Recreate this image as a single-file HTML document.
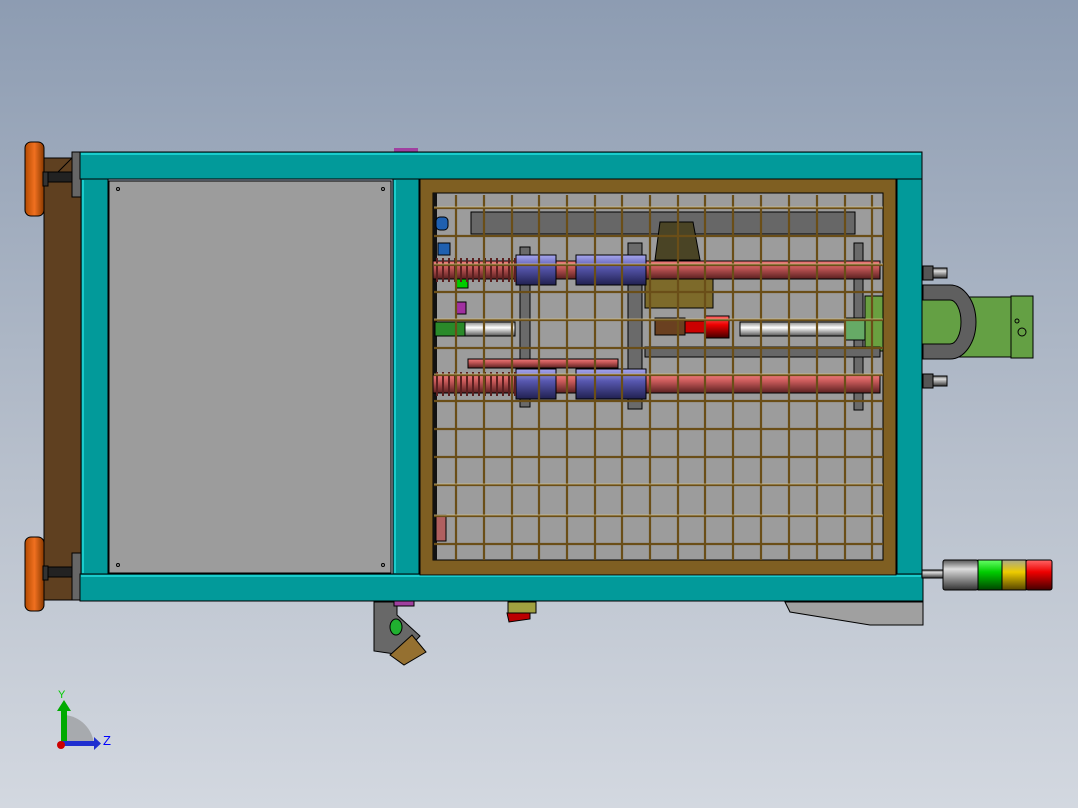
<!DOCTYPE html>
<html><head><meta charset="utf-8"><style>
html,body{margin:0;padding:0;width:1078px;height:808px;overflow:hidden}
body{background:linear-gradient(#8d9cb2,#b9c1cd 60%,#d3d8e0)}
svg{position:absolute;left:0;top:0}
</style></head><body>
<svg width="1078" height="808" viewBox="0 0 1078 808" xmlns="http://www.w3.org/2000/svg">
<defs>
<linearGradient id="red" x1="0" y1="0" x2="0" y2="1"><stop offset="0" stop-color="#f07a7a"/><stop offset=".35" stop-color="#c85a5a"/><stop offset="1" stop-color="#5a2020"/></linearGradient>
<linearGradient id="blue" x1="0" y1="0" x2="0" y2="1"><stop offset="0" stop-color="#a8a8f0"/><stop offset=".4" stop-color="#5858b0"/><stop offset="1" stop-color="#202050"/></linearGradient>
<linearGradient id="white" x1="0" y1="0" x2="0" y2="1"><stop offset="0" stop-color="#888"/><stop offset=".4" stop-color="#fff"/><stop offset="1" stop-color="#555"/></linearGradient>
<linearGradient id="orange" x1="0" y1="0" x2="1" y2="0"><stop offset="0" stop-color="#b44a00"/><stop offset=".5" stop-color="#f07020"/><stop offset="1" stop-color="#8a3a00"/></linearGradient>
<linearGradient id="gray" x1="0" y1="0" x2="0" y2="1"><stop offset="0" stop-color="#555"/><stop offset=".3" stop-color="#ddd"/><stop offset="1" stop-color="#333"/></linearGradient>
<linearGradient id="grn" x1="0" y1="0" x2="0" y2="1"><stop offset="0" stop-color="#6f6"/><stop offset=".4" stop-color="#0c0"/><stop offset="1" stop-color="#040"/></linearGradient>
<linearGradient id="yel" x1="0" y1="0" x2="0" y2="1"><stop offset="0" stop-color="#aa8"/><stop offset=".4" stop-color="#ec0"/><stop offset="1" stop-color="#540"/></linearGradient>
<linearGradient id="rd" x1="0" y1="0" x2="0" y2="1"><stop offset="0" stop-color="#f66"/><stop offset=".4" stop-color="#e00"/><stop offset="1" stop-color="#400"/></linearGradient>
</defs>
<rect x="44" y="158" width="38" height="442" fill="#5f4020" stroke="#000"/>
<polygon points="55,175 72,158 72,175" fill="#5f4020" stroke="#000"/>
<g stroke="#000">
<rect x="46" y="172" width="26" height="10" fill="#222"/>
<rect x="72" y="152" width="9" height="45" fill="#666"/>
<rect x="25" y="142" width="19" height="74" rx="6" fill="url(#orange)"/>
<rect x="43" y="172" width="5" height="14" fill="#333"/>
<rect x="46" y="567" width="26" height="10" fill="#222"/>
<rect x="72" y="553" width="9" height="47" fill="#666"/>
<rect x="25" y="537" width="19" height="74" rx="6" fill="url(#orange)"/>
<rect x="43" y="566" width="5" height="14" fill="#333"/>
</g>
<rect x="394" y="148" width="24" height="5" fill="#a040a0"/>
<g fill="#029a9a" stroke="#000">
<rect x="80" y="152" width="842" height="27"/>
<rect x="80" y="574" width="843" height="27"/>
<rect x="81" y="179" width="27" height="395"/>
<rect x="393" y="179" width="26" height="395"/>
<rect x="897" y="179" width="25" height="395"/>
</g>
<g stroke="#3ff" stroke-width="1"><line x1="81" y1="154" x2="921" y2="154"/><line x1="81" y1="576" x2="921" y2="576"/><line x1="83" y1="180" x2="83" y2="573"/><line x1="395" y1="180" x2="395" y2="573"/></g>
<rect x="109" y="181" width="282" height="392" fill="#9c9c9c" stroke="#000"/>
<g fill="none" stroke="#000"><circle cx="118" cy="189" r="1.5"/><circle cx="383" cy="189" r="1.5"/><circle cx="118" cy="565" r="1.5"/><circle cx="383" cy="565" r="1.5"/></g>
<rect x="420" y="179" width="476" height="396" fill="#7f5f22" stroke="#000"/>
<rect x="433" y="193" width="450" height="367" fill="#9c9c9c" stroke="#000"/>
<rect x="433" y="193" width="4" height="367" fill="#111"/>
<g stroke="#000">
<rect x="471" y="212" width="384" height="22" fill="#676767"/>
<rect x="436" y="217" width="12" height="13" rx="4" fill="#1f60b0"/>
<rect x="438" y="243" width="12" height="12" fill="#1f60b0"/>
<rect x="456" y="278" width="12" height="10" fill="#0c0"/>
<rect x="456" y="302" width="10" height="12" fill="#a030a0"/>
<polygon points="660,222 693,222 700,260 655,260" fill="#4a4425"/>
<rect x="645" y="278" width="68" height="30" fill="#7d6a2a"/>
<rect x="520" y="247" width="10" height="160" fill="#6a6a6a"/>
<rect x="628" y="243" width="14" height="166" fill="#6a6a6a"/>
<rect x="854" y="243" width="9" height="167" fill="#6a6a6a"/>
<rect x="433" y="261" width="447" height="18" fill="url(#red)"/>
<rect x="433" y="375" width="447" height="18" fill="url(#red)"/>
<rect x="516" y="255" width="40" height="30" fill="url(#blue)"/>
<rect x="576" y="255" width="70" height="30" fill="url(#blue)"/>
<rect x="516" y="369" width="40" height="30" fill="url(#blue)"/>
<rect x="576" y="369" width="70" height="30" fill="url(#blue)"/>
<rect x="468" y="359" width="150" height="9" fill="url(#red)"/>
<rect x="435" y="322" width="80" height="14" fill="url(#white)"/>
<rect x="435" y="322" width="30" height="14" fill="#2a8a2a"/>
<rect x="655" y="318" width="30" height="17" fill="#6a4020"/>
<rect x="705" y="316" width="24" height="22" fill="url(#rd)"/>
<rect x="685" y="321" width="20" height="12" fill="#c00"/>
<rect x="740" y="322" width="110" height="14" fill="url(#white)"/>
<rect x="845" y="318" width="20" height="22" fill="#6a6"/>
<rect x="865" y="296" width="18" height="55" fill="#6aa040"/>
<rect x="645" y="347" width="235" height="10" fill="#676767"/>
<rect x="436" y="515" width="10" height="26" fill="#b06060"/>
</g>
<g stroke="#5a2020" stroke-width="2">
<path d="M437 258v24M443 258v24M449 258v24M455 258v24M461 258v24M467 258v24M473 258v24M479 258v24M485 258v24M491 258v24M497 258v24M503 258v24M509 258v24M515 258v24"/>
<path d="M437 372v24M443 372v24M449 372v24M455 372v24M461 372v24M467 372v24M473 372v24M479 372v24M485 372v24M491 372v24M497 372v24M503 372v24M509 372v24M515 372v24"/>
</g>
<g stroke="#6a4e18" stroke-width="2.2">
<path d="M456 195v365M484 195v365M512 195v365M539 195v365M567 195v365M595 195v365M622 195v365M650 195v365M678 195v365M705 195v365M733 195v365M761 195v365M789 195v365M817 195v365M845 195v365M872 195v365"/>
<path d="M434 208h449M434 236h449M434 265h449M434 292h449M434 320h449M434 348h449M434 375h449M434 401h449M434 429h449M434 457h449M434 485h449M434 516h449M434 544h449"/>
</g>
<g stroke="#e8d8a0" stroke-width="0.8" opacity=".8">
<path d="M434 207h449M434 264h449M434 319h449M434 374h449M434 484h449M434 515h449"/>
</g>
<g stroke="#000">
<rect x="923" y="266" width="10" height="14" fill="#555"/><rect x="933" y="268" width="14" height="10" fill="url(#gray)"/>
<rect x="923" y="374" width="10" height="14" fill="#555"/><rect x="933" y="376" width="14" height="10" fill="url(#gray)"/>
<rect x="922" y="297" width="95" height="60" fill="#64a044"/>
<rect x="1011" y="296" width="22" height="62" fill="#64a044"/>
<path d="M923 285h27a26 37 0 0 1 0 74h-27v-15h27a11 22 0 0 0 0-44h-27z" fill="#5f5f5f"/>
<circle cx="1022" cy="332" r="4" fill="none"/><circle cx="1017" cy="321" r="2" fill="none"/>
</g>
<g stroke="#000">
<rect x="922" y="570" width="22" height="8" fill="url(#gray)"/>
<rect x="943" y="560" width="35" height="30" rx="2" fill="url(#gray)"/>
<rect x="978" y="560" width="24" height="30" fill="url(#grn)"/>
<rect x="1002" y="560" width="24" height="30" fill="url(#yel)"/>
<rect x="1026" y="560" width="26" height="30" rx="2" fill="url(#rd)"/>
</g>
<g stroke="#000">
<polygon points="374,602 397,602 397,615 420,636 402,655 374,651" fill="#686868"/>
<polygon points="390,655 412,635 426,652 404,665" fill="#957030"/>
<ellipse cx="396" cy="627" rx="6" ry="8" fill="#20b030"/>
<rect x="394" y="601" width="20" height="5" fill="#a040a0"/>
<rect x="508" y="602" width="28" height="11" fill="#a0a040"/>
<polygon points="507,613 530,613 530,619 509,622" fill="#b00"/>
<polygon points="785,602 923,602 923,625 870,625 790,612" fill="#a0a0a0"/>
</g>
<path d="M64 745 L64 715 A32 32 0 0 1 94 745Z" fill="#888" opacity=".55"/>
<rect x="61" y="708" width="6" height="36" fill="#0a0"/>
<polygon points="57,711 64,700 71,711" fill="#0a0"/>
<rect x="62" y="741" width="33" height="5" fill="#1f2fd0"/>
<polygon points="94,737 101,743.5 94,750" fill="#1f2fd0"/>
<circle cx="61" cy="745" r="4" fill="#c00"/>
<text x="58" y="698" font-family="Liberation Sans, sans-serif" font-size="11" fill="#0c0">Y</text>
<text x="103" y="745" font-family="Liberation Sans, sans-serif" font-size="13" fill="#00f">Z</text>
</svg>
</body></html>
